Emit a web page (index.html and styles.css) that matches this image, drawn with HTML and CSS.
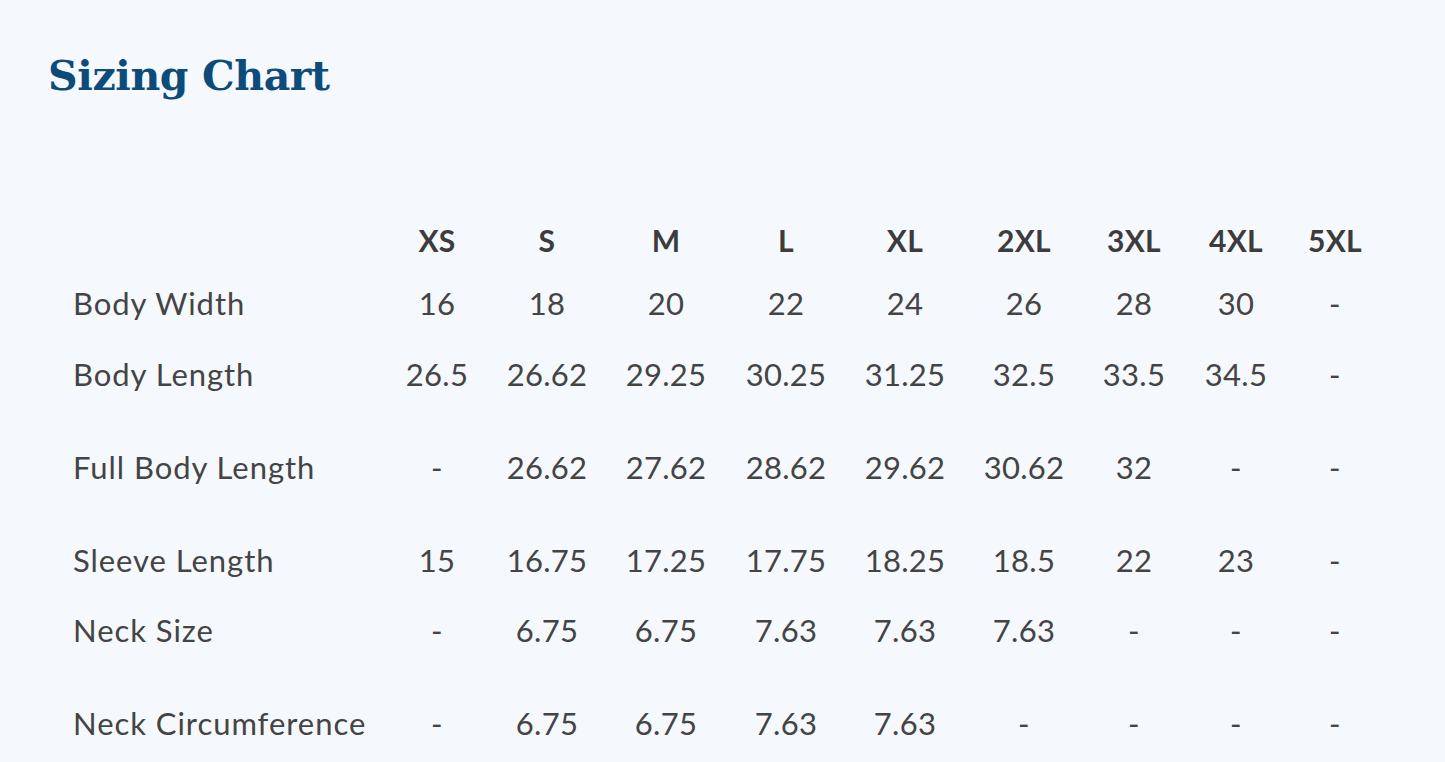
FILE: index.html
```html
<!DOCTYPE html>
<html lang="en">
<head>
<meta charset="utf-8">
<title>Sizing Chart</title>
<link rel="stylesheet" href="styles.css">
</head>
<body>
<main class="page">
  <h1 class="title">Sizing Chart</h1>
  <div class="chart">
    <div class="row row-head">
      <div class="cell label"></div>
      <div class="cell">XS</div><div class="cell">S</div><div class="cell">M</div><div class="cell">L</div><div class="cell">XL</div><div class="cell">2XL</div><div class="cell">3XL</div><div class="cell">4XL</div><div class="cell">5XL</div>
    </div>
    <div class="row row-1">
      <div class="cell label">Body Width</div>
      <div class="cell">16</div><div class="cell">18</div><div class="cell">20</div><div class="cell">22</div><div class="cell">24</div><div class="cell">26</div><div class="cell">28</div><div class="cell">30</div><div class="cell">-</div>
    </div>
    <div class="row row-2">
      <div class="cell label">Body Length</div>
      <div class="cell">26.5</div><div class="cell">26.62</div><div class="cell">29.25</div><div class="cell">30.25</div><div class="cell">31.25</div><div class="cell">32.5</div><div class="cell">33.5</div><div class="cell">34.5</div><div class="cell">-</div>
    </div>
    <div class="row row-3">
      <div class="cell label">Full Body Length</div>
      <div class="cell">-</div><div class="cell">26.62</div><div class="cell">27.62</div><div class="cell">28.62</div><div class="cell">29.62</div><div class="cell">30.62</div><div class="cell">32</div><div class="cell">-</div><div class="cell">-</div>
    </div>
    <div class="row row-4">
      <div class="cell label">Sleeve Length</div>
      <div class="cell">15</div><div class="cell">16.75</div><div class="cell">17.25</div><div class="cell">17.75</div><div class="cell">18.25</div><div class="cell">18.5</div><div class="cell">22</div><div class="cell">23</div><div class="cell">-</div>
    </div>
    <div class="row row-5">
      <div class="cell label">Neck Size</div>
      <div class="cell">-</div><div class="cell">6.75</div><div class="cell">6.75</div><div class="cell">7.63</div><div class="cell">7.63</div><div class="cell">7.63</div><div class="cell">-</div><div class="cell">-</div><div class="cell">-</div>
    </div>
    <div class="row row-6">
      <div class="cell label">Neck Circumference</div>
      <div class="cell">-</div><div class="cell">6.75</div><div class="cell">6.75</div><div class="cell">7.63</div><div class="cell">7.63</div><div class="cell">-</div><div class="cell">-</div><div class="cell">-</div><div class="cell">-</div>
    </div>
  </div>
</main>
</body>
</html>
```

FILE: styles.css
```css
html, body {
  margin: 0;
  padding: 0;
  background: #f5f8fc;
  height: 100%;
  overflow: hidden;
}
.page {
  padding: 46px 0 0 48px;
  font-family: Lato, "Noto Sans", sans-serif;
  color: #444444;
}
.title {
  margin: 0;
  font-family: "DejaVu Serif", serif;
  font-weight: bold;
  font-size: 41px;
  line-height: 60px;
  color: #0d4c7a;
  letter-spacing: -0.4px;
}
.chart {
  margin-top: 103px;
  padding-left: 25px;
}
.row {
  display: grid;
  grid-template-columns: 309px 110px 110px 128px 112px 126px 112px 108px 96px 102px;
  align-items: center;
  font-size: 31px;
  letter-spacing: 0.3px;
}
.cell {
  text-align: center;
  white-space: nowrap;
}
.cell.label {
  text-align: left;
  letter-spacing: 0.95px;
}
.row-head {
  height: 62px;
  font-weight: bold;
  font-size: 30px;
  letter-spacing: 0.3px;
  color: #3c3c3c;
}
.row-1 { height: 64px; }
.row-2 { height: 78px; }
.row-3 { height: 108px; }
.row-4 { height: 78px; }
.row-5 { height: 62px; }
.row-6 { height: 124px; }
```
